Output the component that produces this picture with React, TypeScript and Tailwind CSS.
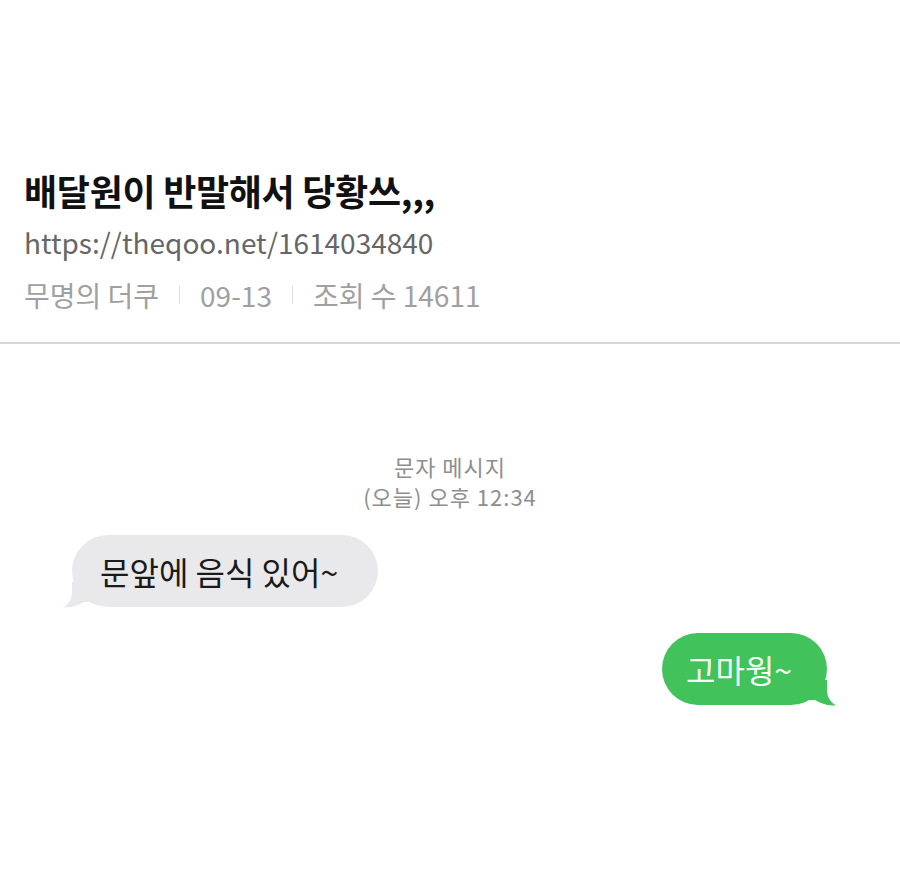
import React from "react";

const font = {
  fontFamily: '"Noto Sans CJK KR", "Noto Sans", sans-serif',
};

function GrayTail() {
  return (
    <svg
      className="absolute left-[-12px] bottom-[-3px]"
      width="32"
      height="28"
      viewBox="0 0 32 28"
    >
      <path
        d="M12 0 L12 10 C12 18 8 22 3 25.5 C11 26 18 23.5 24 20 L32 20 L32 0 Z"
        fill="#e9e9eb"
      />
    </svg>
  );
}

function GreenTail() {
  return (
    <svg
      className="absolute right-[-12px] bottom-[-3px]"
      width="32"
      height="28"
      viewBox="0 0 32 28"
    >
      <path
        d="M20 0 L20 10 C20 18 24 22 29 25.5 C21 26 14 23.5 8 20 L0 20 L0 0 Z"
        fill="#41c25a"
      />
    </svg>
  );
}

export default function App() {
  return (
    <div className="w-full h-[877px] bg-white overflow-hidden" style={font}>
      {/* post header */}
      <div className="pl-6 pt-[168px]">
        <h1 className="text-[36px] leading-[44px] font-bold text-[#111] tracking-[-0.3px]">
          배달원이 반말해서 당황쓰,,,
        </h1>
        <p className="mt-[12px] text-[28px] leading-[36px] text-[#666]">
          https://theqoo.net/1614034840
        </p>
        <p className="mt-[17px] text-[28px] leading-[36px] text-[#a0a0a0] flex items-center">
          <span>무명의 더쿠</span>
          <span className="mx-[20px] w-px h-[18px] bg-[#dddddd]" />
          <span>09-13</span>
          <span className="mx-[20px] w-px h-[18px] bg-[#dddddd]" />
          <span>조회 수 14611</span>
        </p>
      </div>

      <div className="mt-[29px] h-[2px] w-full bg-[#d6d6d6]" />

      {/* messages */}
      <div className="mt-[108px] text-center text-[22px] leading-[28px] tracking-[1px] text-[#8e8e8e]">
        <p>문자 메시지</p>
        <p className="mt-[2px]">(오늘) 오후 12:34</p>
      </div>

      <div className="mt-[25px] pl-[72px] flex">
        <div className="relative">
          <GrayTail />
          <div className="relative h-[72px] w-[306px] rounded-full bg-[#e9e9eb] pl-[28px] flex items-center text-[32px] text-[#1a1a1a]">
            문앞에 음식 있어~
          </div>
        </div>
      </div>

      <div className="mt-[26px] pr-[73px] flex justify-end">
        <div className="relative">
          <GreenTail />
          <div className="relative h-[72px] w-[165px] rounded-full bg-[#41c25a] pl-[24px] flex items-center text-[32px] text-[#f2fff2]">
            고마웡~
          </div>
        </div>
      </div>
    </div>
  );
}
